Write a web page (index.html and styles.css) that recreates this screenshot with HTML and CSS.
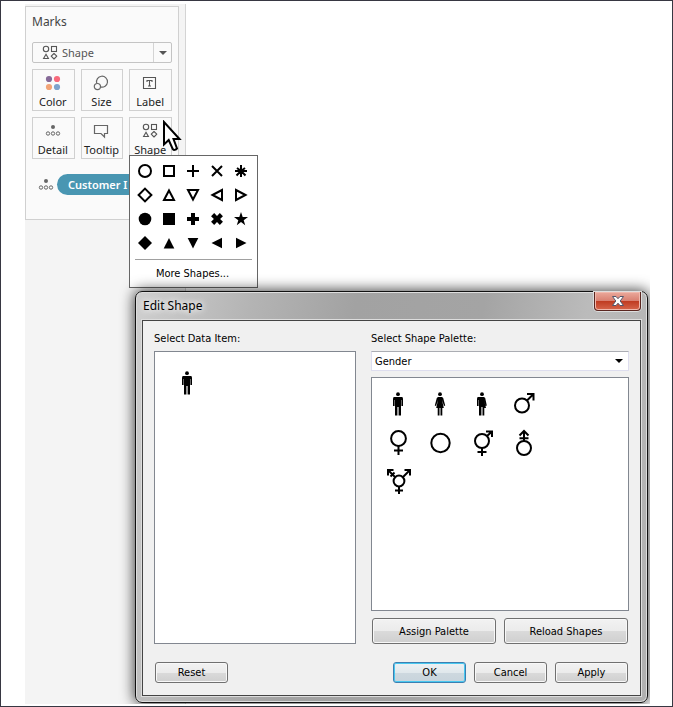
FILE: index.html
```html
<!DOCTYPE html>
<html lang="en">
<head>
<meta charset="utf-8">
<title>Edit Shape</title>
<link rel="stylesheet" href="styles.css">
</head>
<body>
<svg class="defs" aria-hidden="true">
  <defs>
    <symbol id="shapes" viewBox="0 0 16 16">
      <g fill="none" stroke="#555" stroke-width="1.1">
        <circle cx="4" cy="4" r="2.7"/><rect x="9.5" y="1.5" width="5" height="5"/>
        <path d="M4 9.3L6.4 13.5H1.6Z"/><path d="M12 8.5L14.8 11.2L12 14L9.2 11.2Z" stroke-linejoin="round"/>
      </g>
    </symbol>
    <symbol id="detail" viewBox="0 0 16 16">
      <circle cx="8" cy="4" r="2" fill="#666"/>
      <g fill="none" stroke="#666"><circle cx="3" cy="10.5" r="1.7"/><circle cx="8" cy="10.5" r="1.7"/><circle cx="13" cy="10.5" r="1.7"/></g>
    </symbol>
    <symbol id="man" viewBox="-15 -15 30 30">
      <circle cy="-9.8" r="1.9"/><path d="M-4-7H4Q5-7 5-5V2H3.4V-4H3V11.5H.6V3H-.6V11.5H-3V-4H-3.4V2H-5V-5Q-5-7-4-7Z"/>
    </symbol>
  </defs>
</svg>
<main class="stage">
  <aside class="sidebar">
    <section class="marks">
      <h2>Marks</h2>
      <div class="mark-type">
        <svg class="icon"><use href="#shapes"/></svg>
        <select aria-label="Mark type"><option>Shape</option></select>
        <span class="arrow"></span>
      </div>
      <div class="mark-grid">
        <button><svg class="icon" viewBox="0 0 16 16"><circle cx="4" cy="4" r="3.1" fill="#866a98"/><circle cx="12" cy="4" r="3.1" fill="#f86a7c"/><circle cx="4" cy="12" r="3.1" fill="#f2a477"/><circle cx="12" cy="12" r="3.1" fill="#7ea3cc"/></svg>Color</button>
        <button><svg class="icon" viewBox="0 0 16 16"><g fill="none" stroke="#666" stroke-width="1.2"><path d="M3.7 8.2A5.5 5.5 0 1 1 7.5 12"/><circle cx="4.4" cy="11.6" r="3.1"/></g></svg>Size</button>
        <button><svg class="icon" viewBox="0 0 16 16"><path d="M1.5 2.5H13.5V13.5H1.5ZM5 7V5.5H10V7M7.5 5.5V11M6 11H9" fill="none" stroke="#555" stroke-width="1.1"/></svg>Label</button>
        <button><svg class="icon"><use href="#detail"/></svg>Detail</button>
        <button><svg class="icon" viewBox="0 0 16 16"><path d="M1.5 2.5H14.5V10.5H11.5V14L8 10.5H1.5Z" fill="none" stroke="#666" stroke-width="1.2"/></svg>Tooltip</button>
        <button><svg class="icon"><use href="#shapes"/></svg>Shape</button>
      </div>
      <div class="field">
        <svg class="icon"><use href="#detail"/></svg>
        <span class="pill">Customer I</span>
      </div>
    </section>
  </aside>

  <div class="shape-menu">
    <div class="shape-grid">
      <button aria-label="Circle"><svg viewBox="-8 -8 16 16"><circle class="line" r="6"/></svg></button>
      <button aria-label="Square"><svg viewBox="-8 -8 16 16"><path class="line" d="M-5-5H5V5H-5Z"/></svg></button>
      <button aria-label="Plus"><svg viewBox="-8 -8 16 16"><path class="line" d="M-6 0H6M0-6V6"/></svg></button>
      <button aria-label="Cross"><svg viewBox="-8 -8 16 16"><path class="line" d="M-5-5L5 5M5-5L-5 5"/></svg></button>
      <button aria-label="Asterisk"><svg viewBox="-8 -8 16 16"><path class="line" d="M0-6V6M-6 0H6M-4.5 4.5L0 0L4.5 4.5M-4-3L0 0L4-3"/></svg></button>
      <button aria-label="Diamond"><svg viewBox="-8 -8 16 16"><path class="line" d="M0-6.4L6.4 0L0 6.4L-6.4 0Z"/></svg></button>
      <button aria-label="Triangle up"><svg viewBox="-8 -8 16 16"><path class="line" d="M0-4.5L5 5H-5Z"/></svg></button>
      <button aria-label="Triangle down"><svg viewBox="-8 -8 16 16"><path class="line" d="M0 4.5L5-5H-5Z"/></svg></button>
      <button aria-label="Triangle left"><svg viewBox="-8 -8 16 16"><path class="line" d="M-4.5 0L5-5V5Z"/></svg></button>
      <button aria-label="Triangle right"><svg viewBox="-8 -8 16 16"><path class="line" d="M4.5 0L-5-5V5Z"/></svg></button>
      <button aria-label="Filled circle"><svg viewBox="-8 -8 16 16"><circle r="6.3"/></svg></button>
      <button aria-label="Filled square"><svg viewBox="-8 -8 16 16"><path d="M-6-6H6V6H-6Z"/></svg></button>
      <button aria-label="Filled plus"><svg viewBox="-8 -8 16 16"><path d="M-2-6H2V-2H6V2H2V6H-2V2H-6V-2H-2Z"/></svg></button>
      <button aria-label="Filled cross"><svg viewBox="-8 -8 16 16"><path transform="rotate(45)" d="M-2.2-6.2H2.2V-2.2H6.2V2.2H2.2V6.2H-2.2V2.2H-6.2V-2.2H-2.2Z"/></svg></button>
      <button aria-label="Star"><svg viewBox="-8 -8 16 16"><path d="M0-7L1.7-2H7L2.7 1.2L4.2 6.2L0 3.1L-4.2 6.2L-2.7 1.2L-7-2H-1.7Z"/></svg></button>
      <button aria-label="Filled diamond"><svg viewBox="-8 -8 16 16"><path d="M0-7L7 0L0 7L-7 0Z"/></svg></button>
      <button aria-label="Filled triangle up"><svg viewBox="-8 -8 16 16"><path d="M0-5L5.3 5.5H-5.3Z"/></svg></button>
      <button aria-label="Filled triangle down"><svg viewBox="-8 -8 16 16"><path d="M0 5.5L5.3-5H-5.3Z"/></svg></button>
      <button aria-label="Filled triangle left"><svg viewBox="-8 -8 16 16"><path d="M-5.5 0L5-5.3V5.3Z"/></svg></button>
      <button aria-label="Filled triangle right"><svg viewBox="-8 -8 16 16"><path d="M5.5 0L-5-5.3V5.3Z"/></svg></button>
    </div>
    <button class="more">More Shapes...</button>
  </div>

  <svg class="cursor" viewBox="0 0 20 32"><path d="M2 2V24.5L6.7 20L10.7 29Q12.5 31 15 28.5L11.5 19H17.5Z" fill="#fff" stroke="#000" stroke-width="2"/></svg>

  <section class="dialog" role="dialog" aria-labelledby="dialog-title">
    <header>
      <h1 id="dialog-title">Edit Shape</h1>
      <button class="close" aria-label="Close"><svg viewBox="0 0 14 12"><path d="M1.5 1.5H5L7 3.7L9 1.5H12.5L9.2 6L12.5 10.5H9L7 8.2L5 10.5H1.5L4.8 6Z" fill="#fff" stroke="#53566b"/></svg></button>
    </header>
    <div class="client">
      <div class="columns">
        <div class="column">
          <h3>Select Data Item:</h3>
          <div class="list items"><svg><use href="#man"/></svg></div>
        </div>
        <div class="column">
          <label for="palette">Select Shape Palette:</label>
          <div class="combo">
            <select id="palette"><option>Gender</option></select>
            <span class="arrow"></span>
          </div>
          <div class="list palette">
            <svg><use href="#man"/></svg>
            <svg viewBox="-15 -15 30 30"><circle cy="-9.8" r="1.9"/><path d="M-2-7H2L3.2-6L5.2 1.5L4 2L2-4L3.8 4H2.3V11.5H.5V4H-.5V11.5H-2.3V4H-3.8L-2-4L-4 2L-5.2 1.5L-3.2-6Z"/></svg>
            <svg viewBox="-15 -15 30 30"><circle cy="-9.8" r="1.9"/><path d="M-4-7H2L3.2-6L4.8 1.5L3.6 2L2-4L4 4H2.3V11.5H.5V3H-.6V11.5H-3V-4H-3.4V2H-5V-5Q-5-7-4-7Z"/></svg>
            <svg viewBox="-15 -15 30 30"><path class="line" d="M3-3.5L9-9.5M3-10H9.5V-3.5"/><circle class="line" cx="-2" cy="1.5" r="7"/></svg>
            <svg viewBox="-15 -15 30 30"><circle class="line" cx=".5" cy="-4.5" r="7.4"/><path class="line" d="M.5 3V12M-4 7.5H5"/></svg>
            <svg viewBox="-15 -15 30 30"><circle class="line" cx=".5" r="9.2"/></svg>
            <svg viewBox="-15 -15 30 30"><circle class="line" cy="-2" r="7"/><path class="line" d="M0 5V13M-4.5 9H4.5M5-7L10-11.5M4-11.5H10V-6"/></svg>
            <svg viewBox="-15 -15 30 30"><circle class="line" cy="5" r="7"/><path class="line" d="M0-2V-12M-4.5-7.5L0-12L4.5-7.5M-4.5-4.7H4.5"/></svg>
            <svg viewBox="-15 -15 30 30"><g transform="translate(1 -1)"><circle class="line" r="5.4"/><path class="line" d="M0 5.5V13M-4 9.5H4M4-4L11-11M5.5-11H11V-5.5M-4-4L-11-11M-5.5-11H-11V-5.5M-8.5-4.5L-4.5-8.5"/></g></svg>
          </div>
          <div class="pair">
            <button class="btn">Assign Palette</button>
            <button class="btn">Reload Shapes</button>
          </div>
        </div>
      </div>
      <footer>
        <button class="btn reset">Reset</button>
        <button class="btn ok">OK</button>
        <button class="btn">Cancel</button>
        <button class="btn">Apply</button>
      </footer>
    </div>
  </section>
</main>
</body>
</html>
```
FILE: styles.css
```css
* { box-sizing: border-box; }

body {
  margin: 0;
  min-height: 100vh;
  display: flex;
  padding: 3px 22px 2px 24px;
  border: 1px solid #373742;
  background: #fff;
  font-family: "DejaVu Sans Condensed", "DejaVu Sans", sans-serif;
  font-size: 11px;
  color: #000;
}

button, select { font: inherit; color: inherit; }
h1, h2, h3 { margin: 0; font: inherit; }
select { appearance: none; border: 0; background: none; padding: 0; outline: 0; }
.defs { position: absolute; width: 0; height: 0; }
.line { fill: none; stroke: #000; stroke-width: 2; }

.stage {
  position: relative;
  flex: 1;
  display: flex;
  min-height: 640px;
  overflow: hidden;
}

/* Marks card */
.sidebar {
  width: 161px;
  padding-top: 2px;
  background: #f4f4f4;
  border-right: 1px solid #d4d4d4;
  font-family: "Noto Sans", sans-serif;
}
.marks {
  width: 154px;
  height: 214px;
  padding: 0 6px;
  background: #fafafa;
  border: 1px solid #d0d0d0;
}
.marks h2 { font-size: 12px; line-height: 30px; color: #444; margin-bottom: 5px; }
.icon { width: 16px; height: 16px; flex: none; }
.mark-type {
  display: flex;
  align-items: center;
  height: 21px;
  padding-left: 9px;
  gap: 4px;
  border: 1px solid #c4c4c4;
  border-radius: 2px;
  color: #555;
}
.mark-type select { flex: 1; min-width: 0; }
.arrow { display: flex; align-items: center; justify-content: center; width: 18px; height: 100%; pointer-events: none; }
.arrow::after { content: ""; border: 4px solid transparent; border-top-color: currentColor; border-bottom: 0; }
.mark-type .arrow { border-left: 1px solid #d4d4d4; }
.mark-grid { display: grid; grid-template-columns: repeat(3, 1fr); gap: 6px; margin-top: 6px; }
.mark-grid button {
  display: flex;
  flex-direction: column;
  align-items: center;
  gap: 2px;
  height: 42px;
  padding: 5px 1px 0 0;
  border: 1px solid #d0d0d0;
  background: #fafafa;
  color: #222;
  line-height: 18px;
}
.field { display: flex; align-items: center; gap: 3px; margin: 15px 0 0 6px; }
.pill {
  flex: 1;
  padding-left: 11px;
  border-radius: 11px 0 0 11px;
  background: #4996b2;
  color: #fff;
  font-weight: 600;
  line-height: 21px;
  white-space: nowrap;
}

/* Shape menu */
.shape-menu {
  position: absolute;
  left: 104px;
  top: 151px;
  width: 129px;
  padding: 3px 3px 0;
  border: 1px solid #666;
  background: #fff;
}
.shape-grid { display: grid; grid-template-columns: repeat(5, 24px); grid-auto-rows: 24px; }
.shape-grid button { padding: 4px; border: 0; background: none; }
.shape-grid svg { display: block; width: 16px; height: 16px; }
.more {
  display: block;
  width: calc(100% - 4px);
  height: 28px;
  margin: 4px 2px 0;
  padding: 0 2px 0 0;
  border: 0;
  border-top: 1px solid #a0a0a0;
  background: none;
}
.cursor { position: absolute; left: 137px; top: 116px; width: 20px; height: 32px; }

/* Edit Shape dialog */
.dialog {
  position: absolute;
  left: 110px;
  top: 287px;
  right: 2px;
  bottom: 1px;
  display: flex;
  flex-direction: column;
  padding: 0 6px 6px;
  border: 1px solid #111;
  border-radius: 7px;
  background: linear-gradient(100deg, #cfcfcf 0, #b4b4b4 20%, #a2a2a2 38%, #a4a4a4 60%, #bbb 78%, #b0b0b0 100%);
  box-shadow: inset 0 0 0 1px #ddd, 0 0 14px 1px rgba(0, 0, 0, .75);
}
.dialog header { display: flex; justify-content: space-between; height: 28px; padding-left: 1px; }
.dialog h1 { font-family: "Noto Sans", sans-serif; font-size: 12px; line-height: 28px; text-shadow: 0 0 6px #fff, 0 0 8px #fff; }
.close {
  display: grid;
  place-items: center;
  width: 47px;
  height: 19px;
  padding: 0;
  border: 1px solid #5a2620;
  border-top: 0;
  border-radius: 0 0 4px 4px;
  background: linear-gradient(#eba99c, #d98172 48%, #bf3a20 50%, #d6664c);
  box-shadow: inset 0 0 0 1px #f0b8ac, 0 0 0 1px #ddd;
}
.close svg { width: 14px; height: 12px; }
.client {
  flex: 1;
  display: flex;
  flex-direction: column;
  padding: 10px 11px 12px;
  border: 1px solid #444;
  outline: 1px solid #ddd;
  background: #f0f0f0;
}
.columns { flex: 1; display: grid; grid-template-columns: 202fr 258fr; gap: 15px; }
.column { display: flex; flex-direction: column; }
.column h3, .column label { line-height: 16px; margin-bottom: 4px; }
.list { flex: 1; border: 1px solid #828790; background: #fff; }
.list svg { width: 30px; height: 30px; }
.items { padding: 16px 17px; }
.palette {
  display: grid;
  grid-template-columns: repeat(4, 42px);
  grid-auto-rows: 39px;
  align-content: start;
  place-items: center;
  padding: 6px 5px;
}
.combo { display: flex; height: 20px; margin-bottom: 6px; border: 1px solid #dde; border-top-color: #abadb3; background: #fff; }
.combo select { flex: 1; padding-left: 3px; }
.pair { display: grid; grid-template-columns: 1fr 1fr; gap: 8px; margin: 7px 1px 0; }
.pair .btn { height: 26px; }
.btn {
  height: 21px;
  padding: 0;
  border: 1px solid #707070;
  border-radius: 3px;
  background: linear-gradient(#f2f2f2, #ebebeb 50%, #dadada 51%, #cfcfcf);
  box-shadow: inset 0 0 0 1px #f8f8f8;
}
.ok { border-color: #3c7fb1; box-shadow: inset 0 0 0 1px #48c8f0; background: linear-gradient(#edf1f4, #e0e8ec 50%, #cdd8df 51%, #c8d4dc); }
footer { display: flex; gap: 8px; margin: 18px 1px 0; }
footer .btn { width: 73px; }
.reset { margin-right: auto; }
```
